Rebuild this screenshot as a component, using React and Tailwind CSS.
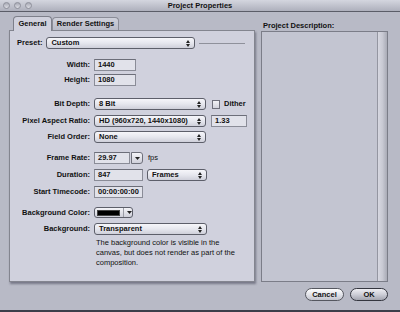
import React from 'react'

const font = { fontFamily: '"Liberation Sans", Arial, sans-serif' }

// tiny up/down arrows at the right of a popup button
const UpDown = () => (
  <svg width="4" height="7" viewBox="0 0 4 7" className="shrink-0">
    <polygon points="0,3 2,0 4,3" fill="#222" />
    <polygon points="0,4 2,7 4,4" fill="#222" />
  </svg>
)

const Popup = ({ value, className = '' }) => (
  <div
    className={`h-[12px] flex items-center justify-between pl-[4px] pr-[4px] rounded-[3px] border border-[#5d5f6a] bg-gradient-to-b from-[#f6f6fa] via-[#e6e7ee] to-[#cfd0da] font-bold ${className}`}
  >
    <span className="leading-none">{value}</span>
    <UpDown />
  </div>
)

const Field = ({ value, className = '' }) => (
  <div
    className={`h-[12px] flex items-center pl-[3px] border border-[#8a8c97] border-t-[#6c6e79] bg-[#e1e2ea] font-bold leading-none ${className}`}
  >
    {value}
  </div>
)

const Row = ({ label, children, className = '' }) => (
  <div className={`flex items-center ${className}`}>
    <div className="w-[80px] text-right font-bold leading-none pr-[0px]">{label}</div>
    <div className="ml-[4px] flex items-center">{children}</div>
  </div>
)

const Light = () => (
  <div className="w-[7px] h-[7px] rounded-full border border-[#8e909b] bg-gradient-to-b from-[#a9abb6] to-[#dcdde4]" />
)

export default function App() {
  return (
    <div
      style={font}
      className="w-[400px] h-[312px] bg-[#b8bac6] text-[7.5px] text-[#111] flex flex-col border-b-2 border-[#3c3e4a] overflow-hidden"
    >
      {/* title bar */}
      <div className="h-[12px] shrink-0 relative flex items-center justify-center border-b border-[#5b5d68] bg-gradient-to-b from-[#d4d6df] to-[#aeb0bc]">
        <div className="absolute left-[3px] top-[2px] flex gap-[4px]">
          <Light />
          <Light />
          <Light />
        </div>
        <span className="font-bold leading-none">Project Properties</span>
      </div>

      {/* main area */}
      <div className="flex pl-[9px] pt-[3px]">
        {/* left: tabs + panel */}
        <div className="w-[246px] flex flex-col">
          <div className="h-[15px] flex items-end pl-[4px]">
            <div className="h-[15px] w-[39px] flex items-center justify-center rounded-t-[4px] border border-b-0 border-[#7d7f8a] bg-[#d0d1dd] font-bold -mb-px relative z-10">
              General
            </div>
            <div className="h-[13px] w-[67px] flex items-center justify-center rounded-t-[4px] border border-b-0 border-[#8a8c97] bg-gradient-to-b from-[#cfd1db] to-[#b9bbc7] font-bold">
              Render Settings
            </div>
          </div>
          <div className="h-[252px] border border-[#83858f] bg-[#d0d1dd] shadow-[1px_2px_2px_rgba(40,40,60,0.45)] flex flex-col">
            {/* preset */}
            <div className="flex items-center mt-[6px] pl-[7px]">
              <span className="font-bold leading-none">Preset:</span>
              <Popup value="Custom" className="ml-[4px] w-[149px]" />
              <div className="flex-1 h-px bg-[#8f919b] ml-[4px] mr-[9px]" />
            </div>

            <Row label="Width:" className="mt-[10px]">
              <Field value="1440" className="w-[42px]" />
            </Row>
            <Row label="Height:" className="mt-[3px]">
              <Field value="1080" className="w-[42px]" />
            </Row>

            <Row label="Bit Depth:" className="mt-[12px]">
              <Popup value="8 Bit" className="w-[112px]" />
              <div className="ml-[6px] w-[8px] h-[9px] border border-[#6e707b] bg-gradient-to-b from-[#f2f2f6] to-[#d2d3dc]" />
              <span className="ml-[4px] font-bold leading-none">Dither</span>
            </Row>
            <Row label="Pixel Aspect Ratio:" className="mt-[5px]">
              <Popup value="HD (960x720, 1440x1080)" className="w-[112px]" />
              <Field value="1.33" className="ml-[5px] w-[36px]" />
            </Row>
            <Row label="Field Order:" className="mt-[4px]">
              <Popup value="None" className="w-[112px]" />
            </Row>

            <Row label="Frame Rate:" className="mt-[9px]">
              <Field value="29.97" className="w-[36px]" />
              <div className="ml-[1px] h-[12px] w-[12px] flex items-center justify-center rounded-r-[3px] border border-[#6e707b] bg-gradient-to-b from-[#f4f4f8] to-[#cfd0da]">
                <svg width="5" height="3" viewBox="0 0 5 3">
                  <polygon points="0,0 5,0 2.5,3" fill="#222" />
                </svg>
              </div>
              <span className="ml-[5px] leading-none">fps</span>
            </Row>
            <Row label="Duration:" className="mt-[5px]">
              <Field value="847" className="w-[49px]" />
              <Popup value="Frames" className="ml-[4px] w-[60px]" />
            </Row>
            <Row label="Start Timecode:" className="mt-[5px]">
              <Field value="00:00:00:00" className="w-[49px]" />
            </Row>

            <Row label="Background Color:" className="mt-[9px]">
              <div className="h-[11px] w-[39px] flex items-center rounded-[3px] border border-[#5d5f6a] bg-gradient-to-b from-[#f4f4f8] to-[#cfd0da] pl-[2px]">
                <div className="w-[23px] h-[6px] bg-black border border-[#444]" />
                <div className="ml-[3px] h-full border-l border-[#9a9ca6]" />
                <svg width="5" height="3" viewBox="0 0 5 3" className="ml-[3px]">
                  <polygon points="0,0 5,0 2.5,3" fill="#222" />
                </svg>
              </div>
            </Row>
            <Row label="Background:" className="mt-[5px]">
              <Popup value="Transparent" className="w-[113px]" />
            </Row>
            <div className="ml-[86px] mt-[3px] leading-[10px]">
              The background color is visible in the
              <br />
              canvas, but does not render as part of the
              <br />
              composition.
            </div>
          </div>
        </div>

        {/* right: description */}
        <div className="ml-[6px] w-[127px] flex flex-col">
          <div className="mt-[6px] pl-[2px] font-bold leading-[9px]">Project Description:</div>
          <div className="mt-[1px] h-[251px] flex justify-end border border-[#7b7d88] bg-[#c3c5d1]">
            <div className="w-[10px] h-full border-l border-[#9496a1] bg-gradient-to-r from-[#d7d8e1] via-[#c8c9d3] to-[#a9abb6]" />
          </div>
        </div>
      </div>

      {/* buttons */}
      <div className="mt-[6px] flex justify-end pr-[12px] gap-[6px]">
        <div className="h-[13px] w-[39px] flex items-center justify-center rounded-full border border-[#55575f] bg-gradient-to-b from-[#ffffff] via-[#e3e4ea] to-[#c3c4ce] font-bold">
          Cancel
        </div>
        <div className="h-[13px] w-[38px] flex items-center justify-center rounded-full border border-[#34363f] bg-gradient-to-b from-[#eeeef3] via-[#cdced7] to-[#a3a5b0] font-bold">
          OK
        </div>
      </div>
    </div>
  )
}
